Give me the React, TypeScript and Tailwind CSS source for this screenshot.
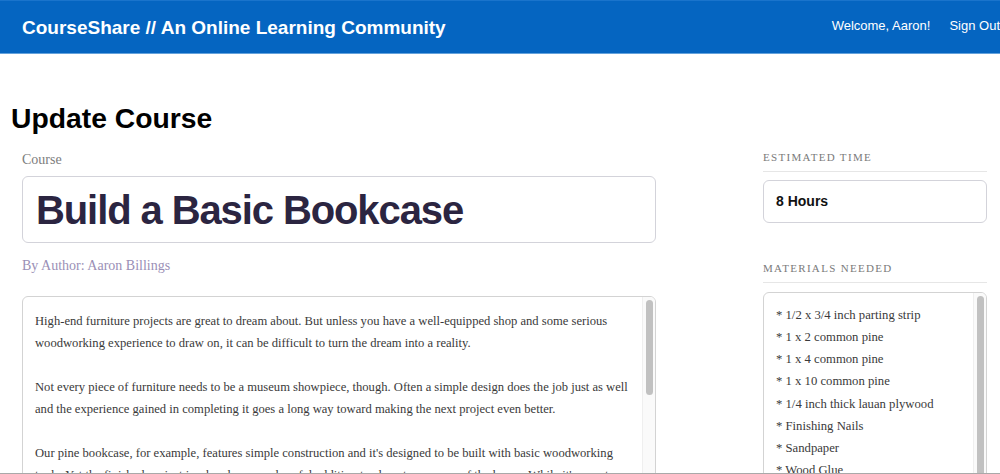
const SANS = "font-['Liberation_Sans',Arial,sans-serif]";

const DESCRIPTION = `High-end furniture projects are great to dream about. But unless you have a well-equipped shop and some serious woodworking experience to draw on, it can be difficult to turn the dream into a reality.

Not every piece of furniture needs to be a museum showpiece, though. Often a simple design does the job just as well and the experience gained in completing it goes a long way toward making the next project even better.

Our pine bookcase, for example, features simple construction and it's designed to be built with basic woodworking tools. Yet the finished project is a handsome and useful addition to almost any room of the house. While it's easy to build, it is sturdy.`;

const MATERIALS = [
  "* 1/2 x 3/4 inch parting strip",
  "* 1 x 2 common pine",
  "* 1 x 4 common pine",
  "* 1 x 10 common pine",
  "* 1/4 inch thick lauan plywood",
  "* Finishing Nails",
  "* Sandpaper",
  "* Wood Glue",
  "* Wood Filler",
];

function Scrollbar({ thumb }: { thumb: string }) {
  return (
    <div className="absolute top-0 right-0 bottom-0 w-[13px] border-l border-[#efefef] bg-[#fafafa]">
      <div className={`mx-auto mt-[3px] w-[7px] rounded-full bg-[#c1c1c1] ${thumb}`} />
    </div>
  );
}

function SectionLabel({ children }: { children: string }) {
  return (
    <h4 className="border-b border-[#e6e6e6] pb-[7px] font-['Liberation_Serif',serif] text-[11px] leading-[14px] tracking-[0.12em] text-[#7a7a7a] uppercase">
      {children}
    </h4>
  );
}

export default function App() {
  return (
    <div className={`h-[474px] overflow-hidden border-b border-[#a9a9a9] bg-white ${SANS}`}>
      <header className="flex h-[54px] items-center justify-between overflow-hidden border-t border-b border-t-[#1a74cc] border-b-[#64a2dc] bg-[#0565c1] pl-[22px] text-white">
        <h1 className="text-[19px] leading-none font-bold">
          CourseShare // An Online Learning Community
        </h1>
        <nav className="flex shrink-0 items-center gap-[19px] pb-[2px] text-[13px]">
          <span>Welcome, Aaron!</span>
          <span>Sign Out</span>
        </nav>
      </header>

      <main className="pt-[48px] pl-[11px]">
        <h2 className="text-[28.3px] leading-[32px] font-bold text-black">Update Course</h2>

        <div className="mt-[16px] flex pl-[11px]">
          <div className="w-[634px]">
            <label className="mt-[2px] block font-['Liberation_Serif',serif] text-[14px] leading-[16px] text-[#7d7d7d]">
              Course
            </label>
            <div className="mt-[8px] flex h-[67px] items-center rounded-[6px] border border-[#d3d3da] px-[13px]">
              <span className="text-[40px] leading-none font-bold tracking-[-1.1px] text-[#2b2541]">
                Build a Basic Bookcase
              </span>
            </div>
            <p className="mt-[15px] font-['Liberation_Serif',serif] text-[14px] leading-[16px] text-[#9a8fb6]">
              By Author: Aaron Billings
            </p>
            <div className="relative mt-[22px] h-[200px] overflow-hidden rounded-[6px] border border-[#d3d3d3]">
              <p className="pt-[13px] pr-[26px] pl-[12px] font-['Liberation_Serif',serif] text-[12.6px] leading-[22px] whitespace-pre-wrap text-[#3a3a3a]">
                {DESCRIPTION}
              </p>
              <Scrollbar thumb="h-[95px]" />
            </div>
          </div>

          <aside className="ml-[107px] w-[224px]">
            <SectionLabel>Estimated Time</SectionLabel>
            <div className="mt-[8px] flex h-[43px] items-center rounded-[6px] border border-[#d3d3da] px-[12px]">
              <span className="text-[14px] font-bold text-[#111]">8 Hours</span>
            </div>

            <div className="mt-[38px]">
              <SectionLabel>Materials Needed</SectionLabel>
            </div>
            <div className="relative mt-[9px] h-[200px] overflow-hidden rounded-[6px] border border-[#d3d3d3]">
              <ul className="pt-[11px] pl-[12px] font-['Liberation_Serif',serif] text-[12.7px] leading-[22.15px] text-[#3a3a3a]">
                {MATERIALS.map((m) => (
                  <li key={m}>{m}</li>
                ))}
              </ul>
              <Scrollbar thumb="h-[400px]" />
            </div>
          </aside>
        </div>
      </main>
    </div>
  );
}
